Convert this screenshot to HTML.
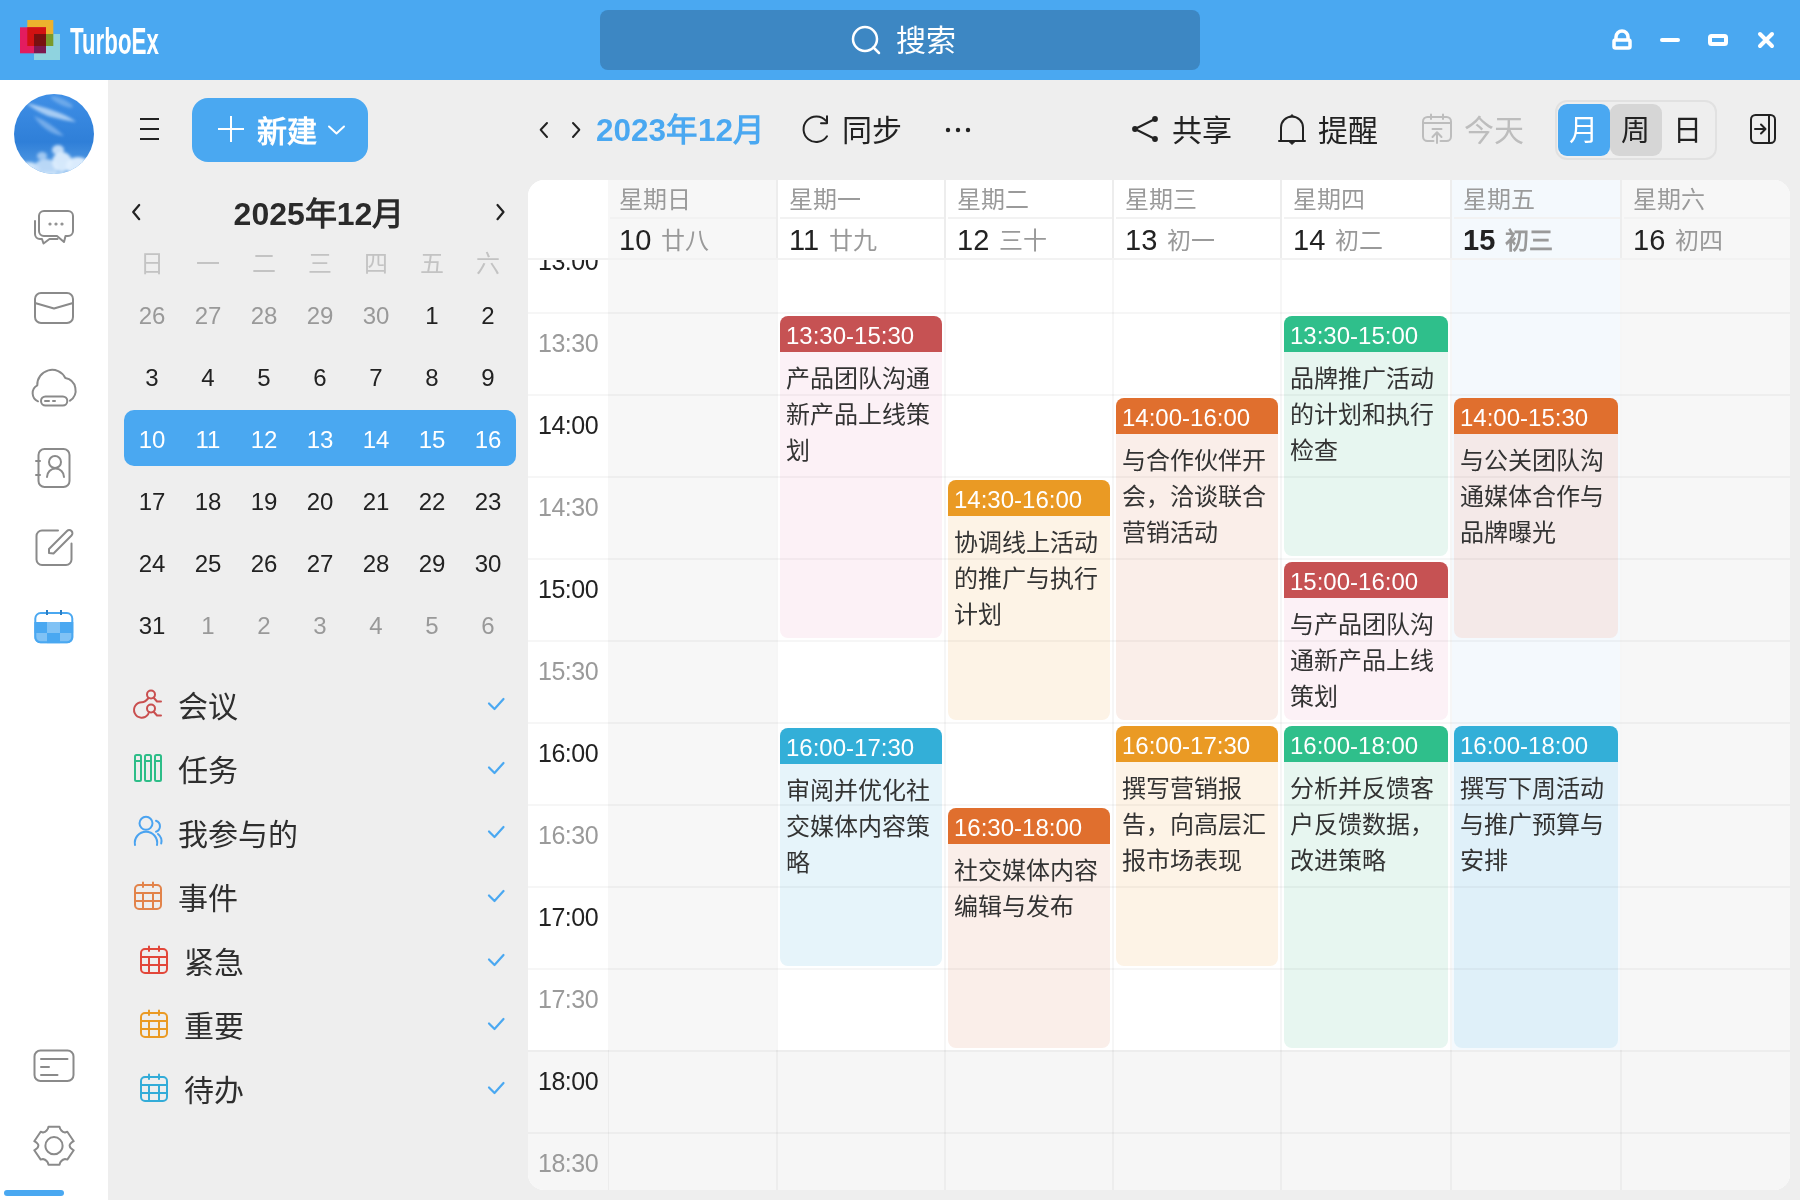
<!DOCTYPE html>
<html lang="zh-CN"><head><meta charset="utf-8"><title>TurboEx</title>
<style>
*{box-sizing:border-box;margin:0;padding:0}
html,body{width:1800px;height:1200px;overflow:hidden;background:#eeeeee;-webkit-font-smoothing:antialiased;font-family:"Liberation Sans",sans-serif;color:#222}
.abs{position:absolute}
.t{position:absolute;white-space:nowrap;will-change:transform}
svg{position:absolute;overflow:visible}
.ev{position:absolute;border-radius:8px;overflow:hidden;will-change:transform}
.evh{height:36px;color:#fff;font-size:24px;line-height:24px;padding:8px 0 0 6px;white-space:nowrap}
.evb{padding:9px 0 0 6px;font-size:24px;line-height:36px;color:#333;white-space:nowrap}
</style></head><body>

<div class="abs" style="left:0;top:0;width:1800px;height:80px;background:#4aa8f1"></div>
<svg style="left:0;top:0" width="200" height="80">
<rect x="27.3" y="20" width="26" height="26" fill="#ecb22e"/>
<rect x="20" y="27.3" width="26" height="26" fill="#e31c5f"/>
<rect x="34" y="34" width="26" height="26" fill="#8fd3df"/>
<rect x="27.3" y="27.3" width="18.7" height="18.7" fill="#d11212"/>
<rect x="46" y="34" width="7.3" height="12" fill="#7a9a2a"/>
<rect x="34" y="46" width="12" height="7.3" fill="#7b1850"/>
<rect x="34" y="34" width="12" height="12" fill="#781010"/>
</svg>
<div class="t" style="left:70px;top:21.5px;font-size:36px;line-height:40px;font-weight:bold;color:#fff;transform:scaleX(0.62);transform-origin:0 0;letter-spacing:0px">TurboEx</div>
<div class="abs" style="left:600px;top:10px;width:600px;height:60px;background:#3d87c3;border-radius:8px"></div>
<svg style="left:0;top:0" width="1800" height="80"><circle cx="865" cy="39" r="12" fill="none" stroke="#fff" stroke-width="2.5"/><line x1="873.5" y1="47.5" x2="879" y2="53" stroke="#fff" stroke-width="2.5" stroke-linecap="round"/></svg>
<div class="t" style="left:896px;top:26px;font-size:30px;line-height:30px;color:#fff">搜索</div>
<svg style="left:0;top:0" width="1800" height="80">
<path d="M1616 39 v-2 a6 6 0 0 1 12 0 v2" fill="none" stroke="#fff" stroke-width="3.5"/>
<rect x="1614" y="40" width="16" height="8" rx="1.5" fill="none" stroke="#fff" stroke-width="3.5"/>
<line x1="1662" y1="40" x2="1678" y2="40" stroke="#fff" stroke-width="4" stroke-linecap="round"/>
<rect x="1710" y="36" width="16" height="8" rx="1.5" fill="none" stroke="#fff" stroke-width="4"/>
<path d="M1760 34 L1772 46 M1772 34 L1760 46" stroke="#fff" stroke-width="4" stroke-linecap="round"/>
</svg>
<div class="abs" style="left:0;top:80px;width:108px;height:1120px;background:#fff"></div>
<svg style="left:0;top:80px" width="108" height="120">
<defs>
<linearGradient id="sky" x1="0" y1="0" x2="0" y2="1"><stop offset="0" stop-color="#3f8fe6"/><stop offset="0.6" stop-color="#2f7fd8"/><stop offset="1" stop-color="#5aa0e6"/></linearGradient>
<clipPath id="av"><circle cx="54" cy="54" r="40"/></clipPath>
<filter id="bl"><feGaussianBlur stdDeviation="1.8"/></filter>
</defs>
<circle cx="54" cy="54" r="40" fill="url(#sky)"/>
<g clip-path="url(#av)" filter="url(#bl)">
<path d="M26 23 Q45 27 60 33 Q70 37 76 42 Q62 40 48 36 Q36 31 26 23 Z" fill="#b4d4f6" opacity="0.9"/>
<path d="M34 36 Q50 42 64 56 Q54 55 46 49 Q38 43 34 36 Z" fill="#8dbcef" opacity="0.7"/>
<ellipse cx="62" cy="22" rx="12" ry="3" fill="#9cc6f2" opacity="0.5" transform="rotate(25 62 22)"/>
<ellipse cx="28" cy="90" rx="12" ry="8" fill="#d6eafc" opacity="0.95"/>
<ellipse cx="46" cy="88" rx="12" ry="9" fill="#c4def8" opacity="0.9"/>
<ellipse cx="58" cy="70" rx="6" ry="5" fill="#d0e6fb" opacity="0.9"/>
<ellipse cx="62" cy="82" rx="10" ry="10" fill="#dcedfd" opacity="0.95"/>
<ellipse cx="78" cy="86" rx="12" ry="9" fill="#e2f0fe" opacity="0.95"/>
<ellipse cx="42" cy="76" rx="5" ry="4" fill="#b8d6f6" opacity="0.8"/>
<ellipse cx="54" cy="98" rx="26" ry="6" fill="#cfe5fb" opacity="0.9"/>
</g>
</svg>
<svg style="left:0;top:0" width="108" height="1200" fill="none" stroke="#8a8a8a" stroke-width="2" stroke-linecap="round" stroke-linejoin="round">
<!-- chat -->
<path d="M44 211 h24 a5 5 0 0 1 5 5 v15 a5 5 0 0 1 -5 5 h-2.5 l-1.5 6 l-7 -6 h-13 a5 5 0 0 1 -5 -5 v-15 a5 5 0 0 1 5 -5 z"/>
<path d="M35 221 v13 a5 5 0 0 0 5 5 h2 l1.5 4.5 l6 -4.5 h8"/>
<circle cx="50" cy="224" r="0.6" fill="#8a8a8a"/><circle cx="56" cy="224" r="0.6" fill="#8a8a8a"/><circle cx="62" cy="224" r="0.6" fill="#8a8a8a"/>
<!-- mail -->
<rect x="35" y="293" width="38" height="30" rx="6"/>
<path d="M35 303 L54 308.5 L73 303"/>
<!-- cloud -->
<path d="M38 401.3 A8.9 8.9 0 0 1 37.3 385.3 A14.8 14.8 0 0 1 65.3 378 A12.5 12.5 0 0 1 70 400.7"/>
<rect x="41" y="396.5" width="26.3" height="9" rx="4.5"/>
<path d="M45 401 h4 M53 401 h2"/>
<!-- contact -->
<rect x="38.5" y="449" width="31" height="38" rx="6"/>
<path d="M36 461 h4 M36 475 h4"/>
<circle cx="55" cy="462" r="6"/>
<path d="M47 477 a8.5 8.5 0 0 1 17 0"/>
<!-- edit -->
<path d="M58 530.5 h-16 a5.5 5.5 0 0 0 -5.5 5.5 v23.5 a5.5 5.5 0 0 0 5.5 5.5 h24 a5.5 5.5 0 0 0 5.5 -5.5 v-16"/>
<path d="M49 553 v-4 l18 -18 a3 3 0 0 1 4.5 4.5 l-18 18 z"/>
<!-- card -->
<rect x="34.5" y="1050.5" width="39" height="30.5" rx="6"/>
<path d="M41 1059 h26.5 M41 1067 h8 M41 1075 h16.5"/>
<!-- gear -->
<path d="M48.5 1126.7 H59.5 Q60.5 1131.5 65 1132.5 L67.3 1131.8 L73.7 1141.2 Q69.6 1143.5 69.6 1145.7 Q69.6 1148 73.7 1150.3 L67.3 1159.6 L65 1159 Q60.5 1160 59.5 1164.7 H48.5 Q47.5 1160 43 1159 L40.7 1159.6 L34.3 1150.3 Q38.4 1148 38.4 1145.7 Q38.4 1143.5 34.3 1141.2 L40.7 1131.8 L43 1132.5 Q47.5 1131.5 48.5 1126.7 Z" stroke-width="2"/>
<circle cx="54" cy="1145.7" r="8.6" stroke-width="2"/>
</svg>
<svg style="left:0;top:0" width="108" height="700">
<clipPath id="calc"><rect x="34.3" y="612" width="39" height="31.3" rx="6"/></clipPath>
<g clip-path="url(#calc)">
<rect x="34" y="612" width="40" height="32" fill="#fff"/>
<rect x="34" y="622" width="13" height="11" fill="#4aa8f1"/><rect x="47" y="622" width="13" height="11" fill="#80c2f5"/><rect x="60" y="622" width="14" height="11" fill="#4aa8f1"/>
<rect x="34" y="633" width="13" height="11" fill="#80c2f5"/><rect x="47" y="633" width="13" height="11" fill="#4aa8f1"/><rect x="60" y="633" width="14" height="11" fill="#80c2f5"/>
</g>
<rect x="35.3" y="613" width="37" height="29.3" rx="5.5" fill="none" stroke="#4aa8f1" stroke-width="2"/>
<path d="M47 610 v5 M61 610 v5" stroke="#2c7fc4" stroke-width="2"/>
</svg>
<div class="abs" style="left:4px;top:1190px;width:60px;height:6px;border-radius:3px;background:#4aa8f1"></div>
<div class="abs" style="left:108px;top:80px;width:420px;height:1120px;background:#eeeeee"></div>
<svg style="left:0;top:0" width="400" height="200"><path d="M140 119 h19 M140 129 h19 M140 139 h19" stroke="#222" stroke-width="2"/></svg>
<div class="abs" style="left:192px;top:98px;width:176px;height:64px;border-radius:16px;background:#4aa8f1"></div>
<svg style="left:0;top:0" width="400" height="200"><path d="M218 129 h26 M231 116 v26" stroke="#fff" stroke-width="2"/><path d="M329 126.5 l7.5 7 l7.5 -7" fill="none" stroke="#fff" stroke-width="2" stroke-linecap="round" stroke-linejoin="round"/></svg>
<div class="t" style="left:257px;top:117px;font-size:30px;line-height:30px;font-weight:bold;color:#fff">新建</div>
<svg style="left:0;top:0" width="528" height="300"><path d="M139.2 205 l-6 7 l6 7.2 M497.5 205 l6 7 l-6 7.2" fill="none" stroke="#222" stroke-width="2.2" stroke-linecap="round" stroke-linejoin="round"/></svg>
<div class="t" style="left:219px;top:198px;width:200px;text-align:center;font-size:32px;line-height:32px;font-weight:bold;color:#2a2a2a">2025年12月</div>
<div class="t" style="left:124px;top:252px;width:56px;text-align:center;font-size:24px;line-height:24px;color:#c3c3c3">日</div>
<div class="t" style="left:180px;top:252px;width:56px;text-align:center;font-size:24px;line-height:24px;color:#c3c3c3">一</div>
<div class="t" style="left:236px;top:252px;width:56px;text-align:center;font-size:24px;line-height:24px;color:#c3c3c3">二</div>
<div class="t" style="left:292px;top:252px;width:56px;text-align:center;font-size:24px;line-height:24px;color:#c3c3c3">三</div>
<div class="t" style="left:348px;top:252px;width:56px;text-align:center;font-size:24px;line-height:24px;color:#c3c3c3">四</div>
<div class="t" style="left:404px;top:252px;width:56px;text-align:center;font-size:24px;line-height:24px;color:#c3c3c3">五</div>
<div class="t" style="left:460px;top:252px;width:56px;text-align:center;font-size:24px;line-height:24px;color:#c3c3c3">六</div>
<div class="abs" style="left:124px;top:410px;width:392px;height:56px;border-radius:10px;background:#4aa8f1"></div>
<div class="t" style="left:124px;top:304px;width:56px;text-align:center;font-size:24px;line-height:24px;color:#999">26</div>
<div class="t" style="left:180px;top:304px;width:56px;text-align:center;font-size:24px;line-height:24px;color:#999">27</div>
<div class="t" style="left:236px;top:304px;width:56px;text-align:center;font-size:24px;line-height:24px;color:#999">28</div>
<div class="t" style="left:292px;top:304px;width:56px;text-align:center;font-size:24px;line-height:24px;color:#999">29</div>
<div class="t" style="left:348px;top:304px;width:56px;text-align:center;font-size:24px;line-height:24px;color:#999">30</div>
<div class="t" style="left:404px;top:304px;width:56px;text-align:center;font-size:24px;line-height:24px;color:#222">1</div>
<div class="t" style="left:460px;top:304px;width:56px;text-align:center;font-size:24px;line-height:24px;color:#222">2</div>
<div class="t" style="left:124px;top:366px;width:56px;text-align:center;font-size:24px;line-height:24px;color:#222">3</div>
<div class="t" style="left:180px;top:366px;width:56px;text-align:center;font-size:24px;line-height:24px;color:#222">4</div>
<div class="t" style="left:236px;top:366px;width:56px;text-align:center;font-size:24px;line-height:24px;color:#222">5</div>
<div class="t" style="left:292px;top:366px;width:56px;text-align:center;font-size:24px;line-height:24px;color:#222">6</div>
<div class="t" style="left:348px;top:366px;width:56px;text-align:center;font-size:24px;line-height:24px;color:#222">7</div>
<div class="t" style="left:404px;top:366px;width:56px;text-align:center;font-size:24px;line-height:24px;color:#222">8</div>
<div class="t" style="left:460px;top:366px;width:56px;text-align:center;font-size:24px;line-height:24px;color:#222">9</div>
<div class="t" style="left:124px;top:428px;width:56px;text-align:center;font-size:24px;line-height:24px;color:#fff">10</div>
<div class="t" style="left:180px;top:428px;width:56px;text-align:center;font-size:24px;line-height:24px;color:#fff">11</div>
<div class="t" style="left:236px;top:428px;width:56px;text-align:center;font-size:24px;line-height:24px;color:#fff">12</div>
<div class="t" style="left:292px;top:428px;width:56px;text-align:center;font-size:24px;line-height:24px;color:#fff">13</div>
<div class="t" style="left:348px;top:428px;width:56px;text-align:center;font-size:24px;line-height:24px;color:#fff">14</div>
<div class="t" style="left:404px;top:428px;width:56px;text-align:center;font-size:24px;line-height:24px;color:#fff">15</div>
<div class="t" style="left:460px;top:428px;width:56px;text-align:center;font-size:24px;line-height:24px;color:#fff">16</div>
<div class="t" style="left:124px;top:490px;width:56px;text-align:center;font-size:24px;line-height:24px;color:#222">17</div>
<div class="t" style="left:180px;top:490px;width:56px;text-align:center;font-size:24px;line-height:24px;color:#222">18</div>
<div class="t" style="left:236px;top:490px;width:56px;text-align:center;font-size:24px;line-height:24px;color:#222">19</div>
<div class="t" style="left:292px;top:490px;width:56px;text-align:center;font-size:24px;line-height:24px;color:#222">20</div>
<div class="t" style="left:348px;top:490px;width:56px;text-align:center;font-size:24px;line-height:24px;color:#222">21</div>
<div class="t" style="left:404px;top:490px;width:56px;text-align:center;font-size:24px;line-height:24px;color:#222">22</div>
<div class="t" style="left:460px;top:490px;width:56px;text-align:center;font-size:24px;line-height:24px;color:#222">23</div>
<div class="t" style="left:124px;top:552px;width:56px;text-align:center;font-size:24px;line-height:24px;color:#222">24</div>
<div class="t" style="left:180px;top:552px;width:56px;text-align:center;font-size:24px;line-height:24px;color:#222">25</div>
<div class="t" style="left:236px;top:552px;width:56px;text-align:center;font-size:24px;line-height:24px;color:#222">26</div>
<div class="t" style="left:292px;top:552px;width:56px;text-align:center;font-size:24px;line-height:24px;color:#222">27</div>
<div class="t" style="left:348px;top:552px;width:56px;text-align:center;font-size:24px;line-height:24px;color:#222">28</div>
<div class="t" style="left:404px;top:552px;width:56px;text-align:center;font-size:24px;line-height:24px;color:#222">29</div>
<div class="t" style="left:460px;top:552px;width:56px;text-align:center;font-size:24px;line-height:24px;color:#222">30</div>
<div class="t" style="left:124px;top:614px;width:56px;text-align:center;font-size:24px;line-height:24px;color:#222">31</div>
<div class="t" style="left:180px;top:614px;width:56px;text-align:center;font-size:24px;line-height:24px;color:#999">1</div>
<div class="t" style="left:236px;top:614px;width:56px;text-align:center;font-size:24px;line-height:24px;color:#999">2</div>
<div class="t" style="left:292px;top:614px;width:56px;text-align:center;font-size:24px;line-height:24px;color:#999">3</div>
<div class="t" style="left:348px;top:614px;width:56px;text-align:center;font-size:24px;line-height:24px;color:#999">4</div>
<div class="t" style="left:404px;top:614px;width:56px;text-align:center;font-size:24px;line-height:24px;color:#999">5</div>
<div class="t" style="left:460px;top:614px;width:56px;text-align:center;font-size:24px;line-height:24px;color:#999">6</div>
<div class="t" style="left:178px;top:692px;font-size:30px;line-height:30px;color:#2e2e2e">会议</div>
<div class="t" style="left:178px;top:756px;font-size:30px;line-height:30px;color:#2e2e2e">任务</div>
<div class="t" style="left:178px;top:820px;font-size:30px;line-height:30px;color:#2e2e2e">我参与的</div>
<div class="t" style="left:178px;top:884px;font-size:30px;line-height:30px;color:#2e2e2e">事件</div>
<div class="t" style="left:184px;top:948px;font-size:30px;line-height:30px;color:#2e2e2e">紧急</div>
<div class="t" style="left:184px;top:1012px;font-size:30px;line-height:30px;color:#2e2e2e">重要</div>
<div class="t" style="left:184px;top:1076px;font-size:30px;line-height:30px;color:#2e2e2e">待办</div>
<svg style="left:0;top:0" width="528" height="1200" fill="none" stroke="#4aa8f1" stroke-width="2.2" stroke-linecap="round" stroke-linejoin="round"><path d="M489 703.5 l5.5 5.5 l9 -10"/><path d="M489 767.5 l5.5 5.5 l9 -10"/><path d="M489 831.5 l5.5 5.5 l9 -10"/><path d="M489 895.5 l5.5 5.5 l9 -10"/><path d="M489 959.5 l5.5 5.5 l9 -10"/><path d="M489 1023.5 l5.5 5.5 l9 -10"/><path d="M489 1087.5 l5.5 5.5 l9 -10"/></svg>
<svg style="left:0;top:0" width="528" height="1200" fill="none" stroke-linecap="round" stroke-linejoin="round">
<g stroke="#c94f4f" stroke-width="2">
<circle cx="151" cy="694.5" r="4"/>
<path d="M153.5 697.5 L157 701.5 H161"/>
<circle cx="151" cy="708.5" r="4"/>
<path d="M153.5 711.5 L157 715.5 H161"/>
<path d="M148.5 698 C146 701 144.5 702.3 142 702.3 A7.7 7.7 0 1 0 148 714.5 L149 712"/>
</g>
<g stroke="#2dbd88" stroke-width="2">
<rect x="135" y="755" width="6" height="26" rx="1.5"/><rect x="145" y="755" width="6" height="26" rx="1.5"/><rect x="155" y="755" width="6" height="26" rx="1.5"/>
<path d="M135 761 h6 M145 761 h6 M155 761 h6"/>
</g>
<g stroke="#4aa3f0" stroke-width="2">
<circle cx="146" cy="823.3" r="6.5"/>
<path d="M135 845 A11.2 11.2 0 1 1 157 845"/>
<path d="M156 820.8 A5.8 5.8 0 0 1 156 831.8"/>
<path d="M158 834 A9.5 9.5 0 0 1 161.2 843.5"/>
</g>
<rect x="135" y="885" width="26" height="24" rx="4" fill="none" stroke="#e2834a" stroke-width="2"/><path d="M135 893 h26 M135 901 h26 M143 893 v16 M153 893 v16 M143 882.5 v4.5 M153 882.5 v4.5" stroke="#e2834a" stroke-width="2"/>
<rect x="141" y="949" width="26" height="24" rx="4" fill="none" stroke="#e2473a" stroke-width="2"/><path d="M141 957 h26 M141 965 h26 M149 957 v16 M159 957 v16 M149 946.5 v4.5 M159 946.5 v4.5" stroke="#e2473a" stroke-width="2"/>
<rect x="141" y="1013" width="26" height="24" rx="4" fill="none" stroke="#ea9a24" stroke-width="2"/><path d="M141 1021 h26 M141 1029 h26 M149 1021 v16 M159 1021 v16 M149 1010.5 v4.5 M159 1010.5 v4.5" stroke="#ea9a24" stroke-width="2"/>
<rect x="141" y="1077" width="26" height="24" rx="4" fill="none" stroke="#33acd8" stroke-width="2"/><path d="M141 1085 h26 M141 1093 h26 M149 1085 v16 M159 1085 v16 M149 1074.5 v4.5 M159 1074.5 v4.5" stroke="#33acd8" stroke-width="2"/>
</svg>
<svg style="left:0;top:0" width="1800" height="180" fill="none" stroke="#222" stroke-width="2.2" stroke-linecap="round" stroke-linejoin="round"><path d="M547 123 l-6.3 6.8 l6.3 7.2 M573 123 l6.3 6.8 l-6.3 7.2" stroke-width="2"/><path d="M826 120.8 A12.8 12.8 0 1 0 827 136.3" stroke-width="2"/><path d="M827 116.2 v7 h-6" stroke-width="2"/><path d="M1155 119 L1135 129 L1155 139" stroke-width="2"/><circle cx="1135" cy="129" r="2.9" fill="#222" stroke="none"/><circle cx="1155" cy="119" r="2.9" fill="#222" stroke="none"/><circle cx="1155" cy="139" r="2.9" fill="#222" stroke="none"/><path d="M1279 141 h26 M1281 141 v-13.5 a11 11 0 0 1 22 0 v13.5" stroke-width="2"/><path d="M1290.3 116.5 l1.7 -2 l1.7 2 z M1289.5 142 l2.5 2.5 l2.5 -2.5 z" fill="#222" stroke-width="1"/><rect x="1751" y="115" width="24" height="28" rx="4.5" stroke-width="2"/><path d="M1769 115 v28 M1755 129 h10 M1761 124.5 l4.5 4.5 l-4.5 4.5" stroke-width="2"/></svg>
<svg style="left:0;top:0" width="1800" height="180"><circle cx="948" cy="130" r="2.2" fill="#222"/><circle cx="958" cy="130" r="2.2" fill="#222"/><circle cx="968" cy="130" r="2.2" fill="#222"/></svg>
<div class="t" style="left:596px;top:115px;font-size:31.5px;line-height:31px;font-weight:bold;color:#4aa8f1">2023年12月</div>
<div class="t" style="left:842px;top:116px;font-size:30px;line-height:30px;color:#222">同步</div>
<div class="t" style="left:1172px;top:116px;font-size:30px;line-height:30px;color:#222">共享</div>
<div class="t" style="left:1318px;top:116px;font-size:30px;line-height:30px;color:#222">提醒</div>
<svg style="left:0;top:0" width="1800" height="180" fill="none" stroke="#bdbdbd" stroke-width="2" stroke-linecap="round" stroke-linejoin="round"><path d="M1433.5 141 h-6 a4.5 4.5 0 0 1 -4.5 -4.5 v-15 a4.5 4.5 0 0 1 4.5 -4.5 h19 a4.5 4.5 0 0 1 4.5 4.5 v15 a4.5 4.5 0 0 1 -4.5 4.5 h-6"/><path d="M1431 114.5 v4.5 M1443 114.5 v4.5 M1423 123 h28 M1432.5 129 h9 M1437 143 v-10.5 M1432.5 137 l4.5 -4.7 l4.5 4.7"/></svg>
<div class="t" style="left:1464px;top:116px;font-size:30px;line-height:30px;color:#bdbdbd">今天</div>
<div class="abs" style="left:1555px;top:100px;width:162px;height:60px;border:2px solid #e1e1e1;border-radius:12px"></div>
<div class="abs" style="left:1558px;top:104px;width:52px;height:52px;border-radius:9px;background:#4aa8f1"></div>
<div class="abs" style="left:1610px;top:104px;width:52px;height:52px;border-radius:9px;background:#d6d6d6"></div>
<div class="t" style="left:1557px;top:117px;width:52px;text-align:center;font-size:29px;line-height:29px;color:#fff">月</div>
<div class="t" style="left:1609px;top:117px;width:52px;text-align:center;font-size:29px;line-height:29px;color:#222">周</div>
<div class="t" style="left:1661px;top:117px;width:52px;text-align:center;font-size:29px;line-height:29px;color:#222">日</div>
<div class="abs" style="left:528px;top:180px;width:1262px;height:1010px;background:#fff;border-radius:16px;overflow:hidden">
<div class="abs" style="left:80px;top:0;width:168px;height:1010px;background:#f7f7f7"></div>
<div class="abs" style="left:250px;top:0;width:166px;height:1010px;background:#fff"></div>
<div class="abs" style="left:418px;top:0;width:166px;height:1010px;background:#fff"></div>
<div class="abs" style="left:586px;top:0;width:166px;height:1010px;background:#fff"></div>
<div class="abs" style="left:754px;top:0;width:168px;height:1010px;background:#fff"></div>
<div class="abs" style="left:924px;top:0;width:168px;height:1010px;background:#f4f9fd"></div>
<div class="abs" style="left:1094px;top:0;width:168px;height:1010px;background:#f7f7f7"></div>
<div class="abs" style="left:0;top:870px;width:1262px;height:200px;background:#f6f6f6"></div>
<div class="abs" style="left:80px;top:870px;width:1px;height:200px;background:#ececec"></div>
<div class="t" style="left:10px;top:69px;font-size:25px;line-height:25px;color:#222;letter-spacing:-0.5px">13:00</div>
<div class="t" style="left:10px;top:151px;font-size:25px;line-height:25px;color:#9a9a9a;letter-spacing:-0.5px">13:30</div>
<div class="t" style="left:10px;top:233px;font-size:25px;line-height:25px;color:#222;letter-spacing:-0.5px">14:00</div>
<div class="t" style="left:10px;top:315px;font-size:25px;line-height:25px;color:#9a9a9a;letter-spacing:-0.5px">14:30</div>
<div class="t" style="left:10px;top:397px;font-size:25px;line-height:25px;color:#222;letter-spacing:-0.5px">15:00</div>
<div class="t" style="left:10px;top:479px;font-size:25px;line-height:25px;color:#9a9a9a;letter-spacing:-0.5px">15:30</div>
<div class="t" style="left:10px;top:561px;font-size:25px;line-height:25px;color:#222;letter-spacing:-0.5px">16:00</div>
<div class="t" style="left:10px;top:643px;font-size:25px;line-height:25px;color:#9a9a9a;letter-spacing:-0.5px">16:30</div>
<div class="t" style="left:10px;top:725px;font-size:25px;line-height:25px;color:#222;letter-spacing:-0.5px">17:00</div>
<div class="t" style="left:10px;top:807px;font-size:25px;line-height:25px;color:#9a9a9a;letter-spacing:-0.5px">17:30</div>
<div class="t" style="left:10px;top:889px;font-size:25px;line-height:25px;color:#222;letter-spacing:-0.5px">18:00</div>
<div class="t" style="left:10px;top:971px;font-size:25px;line-height:25px;color:#9a9a9a;letter-spacing:-0.5px">18:30</div>
<div class="ev" style="left:252px;top:136px;width:162px;height:322px;background:#fcf1f6"><div class="evh" style="background:#c65253">13:30-15:30</div><div class="evb">产品团队沟通<br>新产品上线策<br>划</div></div>
<div class="ev" style="left:420px;top:300px;width:162px;height:240px;background:#fdf3e6"><div class="evh" style="background:#ea9a24">14:30-16:00</div><div class="evb">协调线上活动<br>的推广与执行<br>计划</div></div>
<div class="ev" style="left:588px;top:218px;width:162px;height:322px;background:#faeee9"><div class="evh" style="background:#e06f2e">14:00-16:00</div><div class="evb">与合作伙伴开<br>会，洽谈联合<br>营销活动</div></div>
<div class="ev" style="left:756px;top:136px;width:164px;height:240px;background:#e7f6f0"><div class="evh" style="background:#2fbf8b">13:30-15:00</div><div class="evb">品牌推广活动<br>的计划和执行<br>检查</div></div>
<div class="ev" style="left:756px;top:382px;width:164px;height:158px;background:#fcf1f6"><div class="evh" style="background:#c65253">15:00-16:00</div><div class="evb">与产品团队沟<br>通新产品上线<br>策划</div></div>
<div class="ev" style="left:926px;top:218px;width:164px;height:240px;background:#f4e9e8"><div class="evh" style="background:#e06f2e">14:00-15:30</div><div class="evb">与公关团队沟<br>通媒体合作与<br>品牌曝光</div></div>
<div class="ev" style="left:252px;top:548px;width:162px;height:238px;background:#e6f4fa"><div class="evh" style="background:#33afd8">16:00-17:30</div><div class="evb">审阅并优化社<br>交媒体内容策<br>略</div></div>
<div class="ev" style="left:420px;top:628px;width:162px;height:240px;background:#faeee9"><div class="evh" style="background:#e06f2e">16:30-18:00</div><div class="evb">社交媒体内容<br>编辑与发布</div></div>
<div class="ev" style="left:588px;top:546px;width:162px;height:240px;background:#fdf3e6"><div class="evh" style="background:#ea9a24">16:00-17:30</div><div class="evb">撰写营销报<br>告，向高层汇<br>报市场表现</div></div>
<div class="ev" style="left:756px;top:546px;width:164px;height:322px;background:#e7f6f0"><div class="evh" style="background:#2fbf8b">16:00-18:00</div><div class="evb">分析并反馈客<br>户反馈数据，<br>改进策略</div></div>
<div class="ev" style="left:926px;top:546px;width:164px;height:322px;background:#dff0f9"><div class="evh" style="background:#33afd8">16:00-18:00</div><div class="evb">撰写下周活动<br>与推广预算与<br>安排</div></div>
<div class="abs" style="left:248px;top:0;width:2px;height:1010px;background:rgba(0,0,0,0.035)"></div>
<div class="abs" style="left:416px;top:0;width:2px;height:1010px;background:rgba(0,0,0,0.035)"></div>
<div class="abs" style="left:584px;top:0;width:2px;height:1010px;background:rgba(0,0,0,0.035)"></div>
<div class="abs" style="left:752px;top:0;width:2px;height:1010px;background:rgba(0,0,0,0.035)"></div>
<div class="abs" style="left:922px;top:0;width:2px;height:1010px;background:rgba(0,0,0,0.035)"></div>
<div class="abs" style="left:1092px;top:0;width:2px;height:1010px;background:rgba(0,0,0,0.035)"></div>
<div class="abs" style="left:0;top:132px;width:1262px;height:2px;background:rgba(0,0,0,0.035)"></div>
<div class="abs" style="left:0;top:214px;width:1262px;height:2px;background:rgba(0,0,0,0.035)"></div>
<div class="abs" style="left:0;top:296px;width:1262px;height:2px;background:rgba(0,0,0,0.035)"></div>
<div class="abs" style="left:0;top:378px;width:1262px;height:2px;background:rgba(0,0,0,0.035)"></div>
<div class="abs" style="left:0;top:460px;width:1262px;height:2px;background:rgba(0,0,0,0.035)"></div>
<div class="abs" style="left:0;top:542px;width:1262px;height:2px;background:rgba(0,0,0,0.035)"></div>
<div class="abs" style="left:0;top:624px;width:1262px;height:2px;background:rgba(0,0,0,0.035)"></div>
<div class="abs" style="left:0;top:706px;width:1262px;height:2px;background:rgba(0,0,0,0.035)"></div>
<div class="abs" style="left:0;top:788px;width:1262px;height:2px;background:rgba(0,0,0,0.035)"></div>
<div class="abs" style="left:0;top:870px;width:1262px;height:2px;background:rgba(0,0,0,0.035)"></div>
<div class="abs" style="left:0;top:952px;width:1262px;height:2px;background:rgba(0,0,0,0.035)"></div>
<div class="abs" style="left:80px;top:0;width:168px;height:78px;background:#f7f7f7"></div>
<div class="abs" style="left:250px;top:0;width:166px;height:78px;background:#fff"></div>
<div class="abs" style="left:418px;top:0;width:166px;height:78px;background:#fff"></div>
<div class="abs" style="left:586px;top:0;width:166px;height:78px;background:#fff"></div>
<div class="abs" style="left:754px;top:0;width:168px;height:78px;background:#fff"></div>
<div class="abs" style="left:924px;top:0;width:168px;height:78px;background:#f4f9fd"></div>
<div class="abs" style="left:1094px;top:0;width:168px;height:78px;background:#f7f7f7"></div>
<div class="abs" style="left:0;top:0;width:80px;height:78px;background:#fff"></div>
<div class="abs" style="left:248px;top:0;width:2px;height:78px;background:rgba(0,0,0,0.035)"></div>
<div class="abs" style="left:416px;top:0;width:2px;height:78px;background:rgba(0,0,0,0.035)"></div>
<div class="abs" style="left:584px;top:0;width:2px;height:78px;background:rgba(0,0,0,0.035)"></div>
<div class="abs" style="left:752px;top:0;width:2px;height:78px;background:rgba(0,0,0,0.035)"></div>
<div class="abs" style="left:922px;top:0;width:2px;height:78px;background:rgba(0,0,0,0.035)"></div>
<div class="abs" style="left:1092px;top:0;width:2px;height:78px;background:rgba(0,0,0,0.035)"></div>
<div class="abs" style="left:82px;top:37px;width:166px;height:2px;background:#f2f2f2"></div>
<div class="abs" style="left:252px;top:37px;width:164px;height:2px;background:#f2f2f2"></div>
<div class="abs" style="left:420px;top:37px;width:164px;height:2px;background:#f2f2f2"></div>
<div class="abs" style="left:588px;top:37px;width:164px;height:2px;background:#f2f2f2"></div>
<div class="abs" style="left:756px;top:37px;width:166px;height:2px;background:#f2f2f2"></div>
<div class="abs" style="left:926px;top:37px;width:166px;height:2px;background:#f2f2f2"></div>
<div class="abs" style="left:1096px;top:37px;width:166px;height:2px;background:#f2f2f2"></div>
<div class="abs" style="left:0;top:78px;width:1262px;height:2px;background:#f2f2f2"></div>
<div class="t" style="left:91px;top:8px;font-size:24px;line-height:24px;color:#9a9a9a">星期日</div>
<div class="t" style="left:91px;top:45.5px;font-size:29px;line-height:29px;color:#222;">10<span style="font-size:24px;color:#999;margin-left:10px;position:relative;top:-1.5px">廿八</span></div>
<div class="t" style="left:261px;top:8px;font-size:24px;line-height:24px;color:#9a9a9a">星期一</div>
<div class="t" style="left:261px;top:45.5px;font-size:29px;line-height:29px;color:#222;">11<span style="font-size:24px;color:#999;margin-left:10px;position:relative;top:-1.5px">廿九</span></div>
<div class="t" style="left:429px;top:8px;font-size:24px;line-height:24px;color:#9a9a9a">星期二</div>
<div class="t" style="left:429px;top:45.5px;font-size:29px;line-height:29px;color:#222;">12<span style="font-size:24px;color:#999;margin-left:10px;position:relative;top:-1.5px">三十</span></div>
<div class="t" style="left:597px;top:8px;font-size:24px;line-height:24px;color:#9a9a9a">星期三</div>
<div class="t" style="left:597px;top:45.5px;font-size:29px;line-height:29px;color:#222;">13<span style="font-size:24px;color:#999;margin-left:10px;position:relative;top:-1.5px">初一</span></div>
<div class="t" style="left:765px;top:8px;font-size:24px;line-height:24px;color:#9a9a9a">星期四</div>
<div class="t" style="left:765px;top:45.5px;font-size:29px;line-height:29px;color:#222;">14<span style="font-size:24px;color:#999;margin-left:10px;position:relative;top:-1.5px">初二</span></div>
<div class="t" style="left:935px;top:8px;font-size:24px;line-height:24px;color:#9a9a9a">星期五</div>
<div class="t" style="left:935px;top:45.5px;font-size:29px;line-height:29px;color:#222;font-weight:bold;">15<span style="font-size:24px;color:#999;margin-left:10px;position:relative;top:-1.5px">初三</span></div>
<div class="t" style="left:1105px;top:8px;font-size:24px;line-height:24px;color:#9a9a9a">星期六</div>
<div class="t" style="left:1105px;top:45.5px;font-size:29px;line-height:29px;color:#222;">16<span style="font-size:24px;color:#999;margin-left:10px;position:relative;top:-1.5px">初四</span></div>
</div>
</body></html>
